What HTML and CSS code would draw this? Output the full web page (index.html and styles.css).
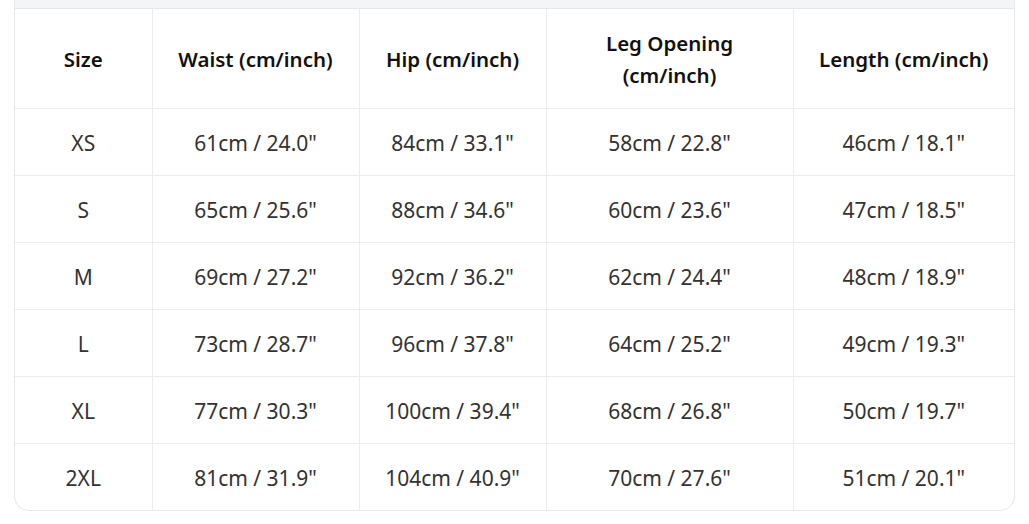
FILE: index.html
```html
<!DOCTYPE html>
<html>
<head>
<meta charset="utf-8">
<link rel="stylesheet" href="styles.css">
</head>
<body>
<div class="wrap">
  <div class="strip"></div>
  <table class="sizes">
    <colgroup>
      <col class="c1"><col class="c2"><col class="c3"><col class="c4"><col class="c5">
    </colgroup>
    <thead>
      <tr>
        <th>Size</th>
        <th>Waist (cm/inch)</th>
        <th>Hip (cm/inch)</th>
        <th>Leg Opening<br>(cm/inch)</th>
        <th>Length (cm/inch)</th>
      </tr>
    </thead>
    <tbody>
      <tr><td>XS</td><td>61cm / 24.0"</td><td>84cm / 33.1"</td><td>58cm / 22.8"</td><td>46cm / 18.1"</td></tr>
      <tr><td>S</td><td>65cm / 25.6"</td><td>88cm / 34.6"</td><td>60cm / 23.6"</td><td>47cm / 18.5"</td></tr>
      <tr><td>M</td><td>69cm / 27.2"</td><td>92cm / 36.2"</td><td>62cm / 24.4"</td><td>48cm / 18.9"</td></tr>
      <tr><td>L</td><td>73cm / 28.7"</td><td>96cm / 37.8"</td><td>64cm / 25.2"</td><td>49cm / 19.3"</td></tr>
      <tr><td>XL</td><td>77cm / 30.3"</td><td>100cm / 39.4"</td><td>68cm / 26.8"</td><td>50cm / 19.7"</td></tr>
      <tr><td>2XL</td><td>81cm / 31.9"</td><td>104cm / 40.9"</td><td>70cm / 27.6"</td><td>51cm / 20.1"</td></tr>
    </tbody>
  </table>
</div>
</body>
</html>
```
FILE: styles.css
```css
html, body {
  margin: 0;
  padding: 0;
  background: #ffffff;
}
body {
  font-family: "Noto Sans", "Open Sans", sans-serif;
}
.wrap {
  margin-left: 14px;
  width: 999px;
  border: 1px solid #e6e8eb;
  border-top: none;
  border-radius: 0 0 15px 15px;
  overflow: hidden;
}
.strip {
  height: 8px;
  background: #f3f5f7;
  border-bottom: 1px solid #e6e8eb;
}
.sizes {
  width: 100%;
  border-collapse: collapse;
  table-layout: fixed;
}
.c1 { width: 137px; }
.c2 { width: 207px; }
.c3 { width: 187px; }
.c4 { width: 247px; }
.c5 { width: auto; }
.sizes th, .sizes td {
  text-align: center;
  vertical-align: middle;
  border-right: 1px solid #ebedf0;
  border-bottom: 1px solid #ebedf0;
  padding: 0;
}
.sizes th:last-child, .sizes td:last-child { border-right: none; }
.sizes tbody tr:last-child td { border-bottom: none; }
.sizes th {
  height: 99px;
  padding-top: 2px;
  box-sizing: border-box;
  font-size: 20.5px;
  font-weight: 600;
  color: #111111;
  line-height: 32px;
}
.sizes td {
  height: 63px;
  padding-top: 3px;
  font-size: 21px;
  color: #333333;
}
```
